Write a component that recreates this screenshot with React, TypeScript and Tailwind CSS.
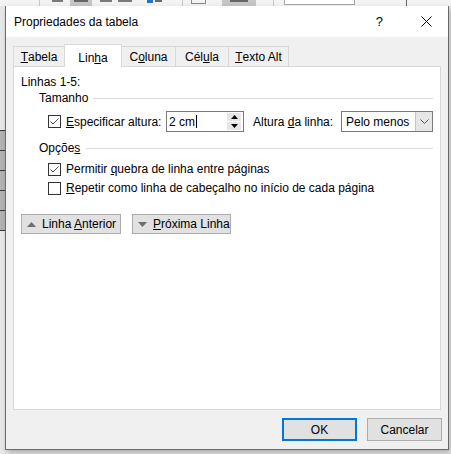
import type { ReactNode } from "react";

const FONT = "font-['Liberation_Sans',Arial,sans-serif]";

function CheckBox({ checked }: { checked: boolean }) {
  return (
    <span className="flex h-[13px] w-[13px] shrink-0 items-center justify-center border border-[#333333] bg-white">
      {checked && (
        <svg width="11" height="11" viewBox="0 0 11 11">
          <polyline points="1.5,5.5 4,8 9.5,2.5" fill="none" stroke="#4d4d4d" strokeWidth="1" />
        </svg>
      )}
    </span>
  );
}

function Section({ label, lineGap }: { label: ReactNode; lineGap: string }) {
  return (
    <div className="flex h-[16px] items-center pl-[18px]">
      <span>{label}</span>
      <div className={`h-px flex-1 bg-[#dcdcdc] ${lineGap}`} />
    </div>
  );
}

type TabDef = { key: string; label: ReactNode; w: string };

const TABS: TabDef[] = [
  { key: "tabela", label: <><u>T</u>abela</>, w: "w-[52px]" },
  { key: "linha", label: <>Lin<u>h</u>a</>, w: "w-[58px]" },
  { key: "coluna", label: <>C<u>o</u>luna</>, w: "w-[55px]" },
  { key: "celula", label: <>Cél<u>u</u>la</>, w: "w-[54px]" },
  { key: "texto", label: <><u>T</u>exto Alt</>, w: "w-[61px]" },
];

function Tabs({ active }: { active: string }) {
  return (
    <div className="flex items-end pl-[7px]">
      {TABS.map((t, i) =>
        t.key === active ? (
          <div
            key={t.key}
            className={`relative z-10 -mb-px flex h-[23px] items-start justify-center border border-b-0 border-[#d9d9d9] bg-white pt-[4px] ${t.w} ${i ? "-ml-px" : ""}`}
          >
            {t.label}
          </div>
        ) : (
          <div
            key={t.key}
            className={`flex h-[20px] items-center justify-center border border-b-0 border-[#d9d9d9] bg-[#f0f0f0] pt-px ${t.w} ${i ? "-ml-px" : ""}`}
          >
            {t.label}
          </div>
        )
      )}
    </div>
  );
}

function Spinner() {
  return (
    <div className="flex h-[21px] w-[78px] items-center border border-[#7a7a7a] bg-white pl-[2px]">
      <span className="flex-1">
        2 cm<span className="ml-px inline-block h-[13px] w-px bg-black align-[-2px]" />
      </span>
      <div className="mr-[2px] flex h-[17px] w-[14px] flex-col gap-px">
        <div className="flex flex-1 items-center justify-center bg-[#e6e6e6]">
          <svg width="7" height="4" viewBox="0 0 7 4"><polygon points="0,4 3.5,0 7,4" fill="#000" /></svg>
        </div>
        <div className="flex flex-1 items-center justify-center bg-[#e6e6e6]">
          <svg width="7" height="4" viewBox="0 0 7 4"><polygon points="0,0 3.5,4 7,0" fill="#000" /></svg>
        </div>
      </div>
    </div>
  );
}

function Select() {
  return (
    <div className="flex h-[21px] w-[92px] items-stretch border border-[#7a7a7a] bg-white">
      <span className="flex flex-1 items-center pl-[4px]">Pelo menos</span>
      <div className="flex w-[17px] items-center justify-center border-l border-[#c4c4c4] bg-[#e6e6e6]">
        <svg width="9" height="5" viewBox="0 0 9 5">
          <polyline points="0.5,0.5 4.5,4.5 8.5,0.5" fill="none" stroke="#555" strokeWidth="1" />
        </svg>
      </div>
    </div>
  );
}

function NavButton({ up, children, w }: { up: boolean; children: ReactNode; w: string }) {
  return (
    <div className={`flex h-[20px] items-center border border-[#adadad] bg-[#e1e1e1] pl-[4px] ${w}`}>
      <svg width="9" height="5" viewBox="0 0 9 5" className="ml-px">
        <polygon points={up ? "0,5 4.5,0 9,5" : "0,0 4.5,5 9,0"} fill="#6e6e6e" />
      </svg>
      <span className="ml-[6px]">{children}</span>
    </div>
  );
}

function Ribbon() {
  return (
    <div className="flex h-[6px] items-start bg-[#f3f3f3]">
      <div className="w-[39px]" />
      <div className="h-full w-px bg-[#c8c8c8]" />
      <div className="w-[12px]" />
      <div className="h-[2px] w-[11px] bg-[#7a7a7a]" />
      <div className="w-[7px]" />
      <div className="h-full w-[22px] bg-[#c6c6c6]"><div className="mx-[4px] h-[2px] bg-[#666]" /></div>
      <div className="w-[8px]" />
      <div className="h-[2px] w-[12px] bg-[#7a7a7a]" />
      <div className="w-[6px]" />
      <div className="h-[2px] w-[14px] bg-[#7a7a7a]" />
      <div className="w-[15px]" />
      <div className="h-[3px] w-[6px] bg-[#2b6fc7]" />
      <div className="w-[2px]" />
      <div className="h-[2px] w-[7px] bg-[#6a6a6a]" />
      <div className="w-[20px]" />
      <div className="h-full w-px bg-[#c8c8c8]" />
      <div className="w-[8px]" />
      <div className="h-[4px] w-[15px] border border-t-0 border-[#8a8a8a]" />
      <div className="w-[16px]" />
      <div className="h-full w-[34px] bg-[#c6c6c6]"><div className="mx-[8px] h-[2px] bg-[#666]" /></div>
      <div className="w-[17px]" />
      <div className="h-full w-px bg-[#c8c8c8]" />
      <div className="w-[10px]" />
      <div className="h-[5px] w-[71px] border border-t-0 border-[#a8a8a8] bg-white" />
      <div className="w-[51px]" />
      <div className="h-full w-px bg-[#666]" />
    </div>
  );
}

export default function App() {
  return (
    <div className={`relative h-[454px] w-[451px] overflow-hidden bg-[#e8e8e8] text-[12px] text-black ${FONT}`}>
      <Ribbon />
      {/* sheet row headers at the left edge, behind the dialog */}
      <div className="mt-[124px] flex w-[5px] flex-col bg-[#b3b3b3]">
        {[0, 1, 2, 3, 4].map((r) => (
          <div key={r} className="h-[20px] border-t border-[#3a3a3a]" />
        ))}
        <div className="border-t border-[#3a3a3a]" />
      </div>

      {/* dialog window */}
      <div className="absolute left-[5px] top-[6px] flex h-[444px] w-[444px] flex-col border border-t-0 border-[#6b6b6b] bg-[#f0f0f0] shadow-[2px_3px_6px_rgba(0,0,0,0.25)]">
        <div className="flex h-[31px] items-center bg-white pl-[8px] pr-[16px]">
          <span className="flex-1">Propriedades da tabela</span>
          <span className="mr-[38px] text-[13px]">?</span>
          <svg width="11" height="11" viewBox="0 0 11 11">
            <path d="M0.5 0.5 L10.5 10.5 M10.5 0.5 L0.5 10.5" stroke="#000" strokeWidth="1" />
          </svg>
        </div>

        <div className="flex flex-1 flex-col pt-[7px]">
          <Tabs active="linha" />
          <div className="mx-[7px] flex h-[344px] flex-col border border-[#d9d9d9] bg-white pl-[7px] pr-[7px] pt-[7px]">
            <div className="flex h-[16px] items-center">Linhas 1-5:</div>
            <Section label="Tamanho" lineGap="ml-[5px]" />
            <div className="mt-[5px] flex h-[21px] items-center pl-[27px]">
              <CheckBox checked />
              <span className="ml-[5px] w-[100px]"><u>E</u>specificar altura:</span>
              <Spinner />
              <span className="ml-[9px] w-[88px]">Altura <u>d</u>a linha:</span>
              <Select />
            </div>
            <div className="mt-[8px]">
              <Section label={<>Opçõe<u>s</u></>} lineGap="ml-[6px]" />
            </div>
            <div className="mt-[4px] flex h-[18px] items-center pl-[27px]">
              <CheckBox checked />
              <span className="ml-[5px]">Permitir <u>q</u>uebra de linha entre páginas</span>
            </div>
            <div className="mt-px flex h-[18px] items-center pl-[27px]">
              <CheckBox checked={false} />
              <span className="ml-[5px]"><u>R</u>epetir como linha de cabeçalho no início de cada página</span>
            </div>
            <div className="mt-[17px] flex gap-[11px]">
              <NavButton up w="w-[100px]">Linha <u>A</u>nterior</NavButton>
              <NavButton up={false} w="w-[99px]"><u>P</u>róxima Linha</NavButton>
            </div>
          </div>

          <div className="mt-[8px] flex justify-end gap-[10px] pr-[6px]">
            <div className="flex h-[23px] w-[75px] items-center justify-center border-2 border-[#0078d7] bg-[#e1e1e1]">OK</div>
            <div className="flex h-[23px] w-[75px] items-center justify-center border border-[#adadad] bg-[#e1e1e1]">Cancelar</div>
          </div>
        </div>
      </div>
    </div>
  );
}
